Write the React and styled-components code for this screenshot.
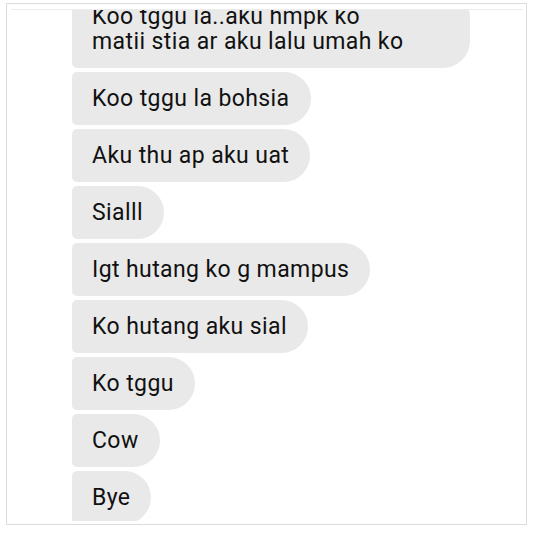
import React from 'react';
import styled, { createGlobalStyle } from 'styled-components';

const GlobalStyle = createGlobalStyle`
  body {
    margin: 0;
    background: #fff;
    font-family: Roboto, "Noto Sans", sans-serif;
  }
`

const Frame = styled.div`
  box-sizing: border-box;
  width: 521px;
  height: 522px;
  margin: 3px 0 0 6px;
  border: 1px solid #dcdcdc;
  padding: 5px 3px 3px 4px;
  display: flex;
`
const Thread = styled.div`
  flex: 1;
  border-top: 1px solid #ececec;
  overflow: hidden;
`
const List = styled.div`
  display: flex;
  flex-direction: column;
  align-items: flex-start;
  gap: 4px;
  margin-top: -20px;
  padding-left: 61px;
`
const Bubble = styled.div`
  box-sizing: border-box;
  min-height: 53px;
  max-width: 398px;
  width: ${props => props.wide ? '398px' : 'auto'};
  padding: 14px 21px 14px 20px;
  background: #e9e9e9;
  color: #111;
  font-size: 23px;
  letter-spacing: 0.4px;
  line-height: 25px;
  border-radius: 5px 27px 27px 5px;
  white-space: nowrap;
`

const messages = [
  'Koo tggu la bohsia',
  'Aku thu ap aku uat',
  'Sialll',
  'Igt hutang ko g mampus',
  'Ko hutang aku sial',
  'Ko tggu',
  'Cow',
  'Bye',
]

const App = () => {
  return (
    <>
      <GlobalStyle />
      <Frame>
        <Thread>
          <List>
            <Bubble wide>
              Koo tggu la..aku hmpk ko<br />matii stia ar aku lalu umah ko
            </Bubble>
            {messages.map((m, idx) => (
              <Bubble key={idx}>{m}</Bubble>
            ))}
          </List>
        </Thread>
      </Frame>
    </>
  )
}

export default App
